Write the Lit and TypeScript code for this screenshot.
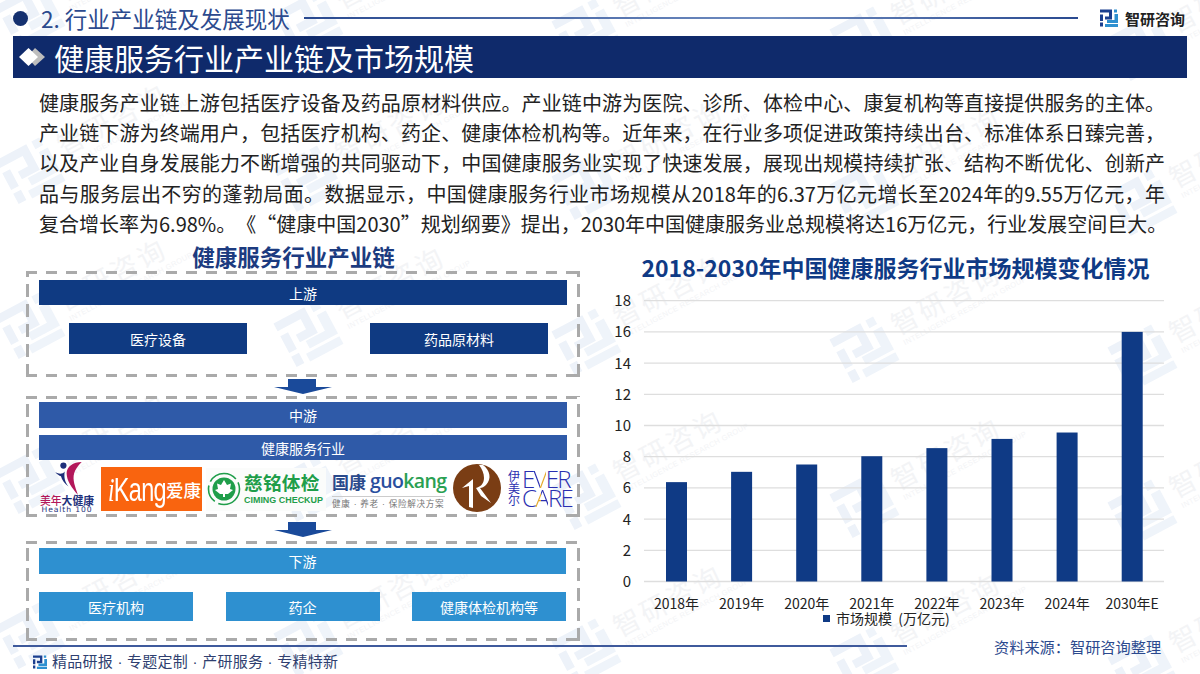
import { LitElement, html, svg, css } from "lit";
import { customElement } from "lit/decorators.js";

const BARS = [
  { label: "2018年", value: 6.37 },
  { label: "2019年", value: 7.03 },
  { label: "2020年", value: 7.5 },
  { label: "2021年", value: 8.03 },
  { label: "2022年", value: 8.55 },
  { label: "2023年", value: 9.14 },
  { label: "2024年", value: 9.55 },
  { label: "2030年E", value: 16 },
];

const INTRO = [
  "健康服务产业链上游包括医疗设备及药品原材料供应。产业链中游为医院、诊所、体检中心、康复机构等直接提供服务的主体。",
  "产业链下游为终端用户，包括医疗机构、药企、健康体检机构等。近年来，在行业多项促进政策持续出台、标准体系日臻完善，",
  "以及产业自身发展能力不断增强的共同驱动下，中国健康服务业实现了快速发展，展现出规模持续扩张、结构不断优化、创新产",
  "品与服务层出不穷的蓬勃局面。数据显示，中国健康服务行业市场规模从2018年的6.37万亿元增长至2024年的9.55万亿元，年",
  "复合增长率为6.98%。《“健康中国2030”规划纲要》提出，2030年中国健康服务业总规模将达16万亿元，行业发展空间巨大。",
];

// brand mark, 18 x 18
const mark = (dark: string, light: string) => svg`
  <path fill=${dark} d="M0 0.5H12V10.500H5V7.500H9V3.500H0Z" />
  <path fill=${dark} d="M0 5.500H3V12H0ZM0 13.500H3V17.500H0Z" />
  <path fill=${light} d="M14 0.500H17V3.500H14ZM14.500 5H18V14H7V11H14.500Z" />
  <path fill=${light} d="M5 15H18V18H5Z" />
`;

const arrow = html`<svg class="arrow" width="58" height="15" viewBox="0 0 58 15">
  <path fill="#1a4a9a" d="M14 0H42V8H58L29 15L0 8H14Z" />
</svg>`;

@customElement("app-root")
export class AppRoot extends LitElement {
  static styles = css`
    :host {
      display: block;
      position: relative;
      width: 1200px;
      height: 674px;
      overflow: hidden;
      background: #fff;
      font-family: "Noto Sans CJK SC", "Noto Sans", sans-serif;
      color: #222;
    }
    .wm {
      position: absolute;
      inset: 0;
    }
    .wm text {
      fill: #f3f4f6;
    }
    .page {
      position: relative;
      display: flex;
      flex-direction: column;
      padding: 0 13px;
      height: 674px;
      box-sizing: border-box;
    }
    .top {
      display: flex;
      align-items: center;
      height: 36px;
      flex: none;
    }
    .bullet {
      width: 15px;
      height: 15px;
      border-radius: 50%;
      background: #14306f;
      margin-right: 13px;
    }
    .section {
      font-size: 22.5px;
      line-height: 36px;
      color: #2c4a8e;
      white-space: nowrap;
    }
    .rule {
      flex: 1;
      height: 2px;
      margin: 0 22px 0 14px;
      background: linear-gradient(90deg, #2a4a90, #6f8cc0 60%, #2a4a90);
    }
    .brand {
      display: flex;
      align-items: center;
      gap: 7px;
      margin-right: 2px;
      font-size: 15px;
      font-weight: 700;
      color: #222;
    }
    .title {
      display: flex;
      align-items: center;
      height: 42px;
      flex: none;
      background: #0f2a6b;
      color: #fff;
      font-size: 30px;
    }
    .title svg {
      margin: 0 9px 0 6px;
    }
    .intro {
      margin: 10px 22px 0 26px;
      font-size: 20px;
      line-height: 30.2px;
      flex: none;
      text-spacing-trim: space-all;
    }
    .intro div {
      white-space: nowrap;
      text-align: justify;
      text-align-last: justify;
    }
    .cols {
      display: grid;
      grid-template-columns: 569px 605px;
      margin-top: 2px;
      height: 400px;
      flex: none;
    }
    .left {
      padding-left: 13px;
      display: flex;
      flex-direction: column;
    }
    .left h3 {
      margin: 0;
      width: 535px;
      text-align: center;
      font-size: 22.5px;
      line-height: 30px;
      font-weight: 700;
      color: #1c3b80;
    }
    .box {
      width: 554px;
      box-sizing: border-box;
      padding: 0 13px;
      background-image:
        repeating-linear-gradient(90deg, #aaa 0 11px, transparent 11px 20px),
        repeating-linear-gradient(90deg, #aaa 0 11px, transparent 11px 20px),
        repeating-linear-gradient(0deg, #aaa 0 13px, transparent 13px 20px),
        repeating-linear-gradient(0deg, #aaa 0 13px, transparent 13px 20px);
      background-size: 100% 3px, 100% 3px, 3px 100%, 3px 100%;
      background-position: 0 0, 0 100%, 0 0, 100% 0;
      background-repeat: no-repeat;
    }
    .b1 {
      height: 106px;
      padding-top: 9px;
    }
    .b2 {
      height: 121px;
      padding-top: 6px;
    }
    .b3 {
      height: 100px;
      padding-top: 7px;
    }
    .bar {
      display: flex;
      align-items: center;
      justify-content: center;
      color: #fff;
      font-size: 14px;
      height: 25px;
    }
    .navy {
      background: #0f3a82;
    }
    .mid {
      background: #2f5aa8;
    }
    .sky {
      background: #2e90d0;
    }
    .b2 .bar + .bar {
      margin-top: 7px;
    }
    .b2 .bar:first-child,
    .b3 > .bar {
      height: 26px;
    }
    .b3 > .bar,
    .trio {
      margin-right: 1px;
    }
    .pair {
      display: flex;
      justify-content: space-between;
      margin-top: 18px;
      padding: 0 19px 0 30px;
    }
    .pair .bar {
      width: 178px;
      height: 31px;
    }
    .trio {
      display: flex;
      justify-content: space-between;
      margin-top: 18px;
    }
    .trio .bar {
      width: 154px;
      height: 29px;
    }
    .link {
      width: 554px;
      display: flex;
      justify-content: center;
      align-items: center;
    }
    .l1 {
      height: 19px;
    }
    .l2 {
      height: 24px;
    }
    .arrow {
      display: block;
    }
    .logos {
      display: flex;
      align-items: center;
      height: 52px;
      margin: 2px -8px 0 0;
    }

    .health {
      width: 56px;
      margin-right: 6px;
      flex: none;
      display: flex;
      flex-direction: column;
      align-items: center;
      font-weight: 700;
      line-height: 1;
    }
    .health svg {
      display: block;
      margin-left: 3px;
    }
    .health .cn {
      font-size: 10.8px;
      height: 11px;
      line-height: 11px;
      color: #1d2f7a;
      white-space: nowrap;
    }
    .health .cn b {
      color: #b3175a;
      font-weight: 500;
    }
    .health .en {
      font-size: 7.6px;
      height: 8px;
      line-height: 8px;
      letter-spacing: 0.9px;
      color: #1d2f7a;
      white-space: nowrap;
      font-family: "DejaVu Sans", sans-serif;
      font-weight: 400;
    }
    .ikang {
      width: 101px;
      height: 44px;
      margin-top: 2px;
      padding-left: 7px;
      box-sizing: border-box;
      background: #f9640f;
      color: #fff;
      display: flex;
      align-items: center;
      white-space: nowrap;
      flex: none;
    }
    .ikang .en {
      font-family: "Liberation Sans", sans-serif;
      font-size: 34px;
      letter-spacing: -1px;
      display: inline-block;
      width: 58px;
      transform: scaleX(0.69);
      transform-origin: 0 50%;
    }
    .ikang .en i {
      font-family: "Liberation Serif", serif;
    }
    .ikang .cn {
      font-size: 17.5px;
      font-weight: 500;
    }
    .ciming {
      width: 120px;
      height: 43px;
      margin: 2px 0 0 4px;
      padding-left: 1px;
      box-sizing: border-box;
      background: #fbfcfb;
      display: flex;
      align-items: center;
      flex: none;
      color: #1f9e4a;
      gap: 3px;
    }
    .ciming .txt {
      line-height: 1;
      white-space: nowrap;
    }
    .ciming .cn {
      font-size: 18.6px;
      font-weight: 700;
      letter-spacing: 0.3px;
    }
    .ciming .en {
      font-family: "Liberation Sans", sans-serif;
      font-size: 8.95px;
      font-weight: 700;
      margin-top: 4px;
    }
    .guokang {
      width: 113px;
      margin: 2px 0 0 6px;
      flex: none;
      white-space: nowrap;
    }
    .guokang .head {
      display: flex;
      align-items: center;
      gap: 4px;
      height: 29px;
      padding-bottom: 2px;
      border-bottom: 1px solid #ccc;
      box-sizing: border-box;
    }
    .guokang .cn {
      font-size: 17px;
      font-weight: 700;
      color: #2a4a8c;
    }
    .guokang .en {
      font-family: "Open Sans", sans-serif;
      font-size: 19.5px;
      letter-spacing: -0.6px;
      color: #2a4f9e;
      line-height: 1;
      font-weight: 600;
    }
    .guokang .en b {
      color: #2aa052;
      font-weight: 600;
    }
    .guokang .sub {
      font-family: "Liberation Sans", "Noto Sans CJK SC", sans-serif;
      font-size: 8.6px;
      line-height: 12px;
      color: #777;
      letter-spacing: 0.7px;
      margin-top: 1px;
    }
    .evercare {
      margin-left: 7px;
      display: flex;
      align-items: center;
      flex: none;
      color: #2a2fb0;
    }
    .evercare .v {
      width: 12px;
      font-size: 12px;
      line-height: 12px;
      margin-right: 2px;
      white-space: normal;
    }
    .evercare .w {
      font-family: "Open Sans", sans-serif;
      font-size: 24px;
      line-height: 19px;
      letter-spacing: -1.7px;
      font-weight: 300;
      white-space: nowrap;
    }
    .evercare .w .vee {
      background: linear-gradient(90deg, #2a2fb0 50%, #e5a92a 50%);
      -webkit-background-clip: text;
      background-clip: text;
      color: transparent;
    }
    .evercare .w .ay {
      background: linear-gradient(90deg, #e5a92a 50%, #2a2fb0 50%);
      -webkit-background-clip: text;
      background-clip: text;
      color: transparent;
    }
    .right {
      display: flex;
      flex-direction: column;
    }
    .right h3 {
      margin: 11px 0 2px;
      padding-left: 22px;
      font-size: 23px;
      line-height: 30px;
      font-weight: 700;
      text-align: center;
      color: #0f3a85;
      white-space: nowrap;
    }
    .right svg {
      display: block;
    }
    .right text {
      font-family: "Noto Sans CJK SC", sans-serif;
      fill: #222;
    }
    .foot {
      display: flex;
      align-items: center;
      height: 22px;
      margin-top: -6px;
      flex: none;
    }
    .foot .line {
      width: 894px;
      height: 2px;
      background: #3f5a9c;
    }
    .foot .src {
      margin-left: 87px;
      font-size: 15.2px;
      color: #2c4a8e;
      white-space: nowrap;
    }
    .slogan {
      display: flex;
      align-items: center;
      gap: 5px;
      margin: -5px 0 0 20px;
      font-family: "Liberation Sans", "Noto Sans CJK SC", sans-serif;
      font-size: 15px;
      letter-spacing: 0.25px;
      line-height: 20px;
      color: #2f3f70;
      white-space: pre;
    }
  `;

  renderWatermark() {
    const spots: { x: number; y: number }[] = [];
    for (let i = 0; i < 5; i++) {
      for (let j = 0; j < 5; j++) {
        spots.push({ x: 30 + 278 * i, y: 15 + i * 8 + 155 * j });
      }
    }
    return html`<svg class="wm" width="1200" height="674" viewBox="0 0 1200 674">
      ${spots.map(
        (p) => svg`<g transform="translate(${p.x} ${p.y}) rotate(-28)">
          <g transform="translate(-26 -26) scale(2.9)">${mark("#edf2f9", "#eff4fa")}</g>
          <text x="36" y="4" font-size="27" letter-spacing="3">智研咨询</text>
          <text x="38" y="16" font-size="7.5" font-family="Liberation Sans" letter-spacing="0.4">INTELLIGENCE RESEARCH GROUP</text>
        </g>`
      )}
    </svg>`;
  }

  renderChart() {
    // svg origin sits at page (582, 285)
    const base = 297.5;
    const unit = 15.6;
    const ticks = [0, 2, 4, 6, 8, 10, 12, 14, 16, 18];
    return html`<svg width="605" height="347" viewBox="0 0 605 347">
      ${ticks.map(
        (t) => svg`
          <line x1="62" x2="582" y1=${base - t * unit} y2=${base - t * unit} stroke="#dedede" stroke-width="1.3" />
          <text x="49" y=${base - t * unit + 5.5} font-size="15" text-anchor="end">${t}</text>`
      )}
      ${BARS.map((b, i) => {
        const x = 84 + i * 65.1;
        const h = b.value * unit;
        return svg`
          <rect x=${x} y=${base - h} width="21" height=${h} fill="#0f3a85" />
          <text x=${x + 10.5} y="325" font-size="14" text-anchor="middle">${b.label}</text>`;
      })}
      <rect x="241" y="331" width="7" height="7" fill="#0f3a85" />
      <text x="254" y="340" font-size="14" xml:space="preserve">市场规模  (万亿元)</text>
    </svg>`;
  }

  render() {
    return html`
      ${this.renderWatermark()}
      <div class="page">
        <div class="top">
          <span class="bullet"></span>
          <span class="section">2. 行业产业链及发展现状</span>
          <span class="rule"></span>
          <span class="brand">
            <svg width="18" height="18" viewBox="0 0 18 18">${mark("#1b3f8f", "#2e90d0")}</svg>
            智研咨询
          </span>
        </div>
        <div class="title">
          <svg width="26" height="20" viewBox="0 0 26 20">
            <path fill="#bdbdbd" d="M16 1L26 10L16 19L8 10Z" />
            <path fill="#fff" d="M9.500 1L19 10L9.500 19L0 10Z" />
          </svg>
          健康服务行业产业链及市场规模
        </div>
        <div class="intro">${INTRO.map((l) => html`<div>${l}</div>`)}</div>
        <div class="cols">
          <div class="left">
            <h3>健康服务行业产业链</h3>
            <div class="box b1">
              <div class="bar navy">上游</div>
              <div class="pair">
                <div class="bar navy">医疗设备</div>
                <div class="bar navy">药品原材料</div>
              </div>
            </div>
            <div class="link l1">${arrow}</div>
            <div class="box b2">
              <div class="bar mid">中游</div>
              <div class="bar mid">健康服务行业</div>
              <div class="logos">
                <div class="health">
                  <svg width="29" height="33" viewBox="0 0 30 35">
                    <circle cx="9.600" cy="3.800" r="3.300" fill="#1d2f7a" />
                    <path fill="#1d2f7a" d="M1 11C5 13 9 13 11 10C10 16 11 21 15 26C11 23 8 19 7 15C5 15 3 13 1 11Z" />
                    <path fill="#b3175a" d="M29 0C20 0 13 5 13 12C13 20 19 28 25 35C22 26 19 19 21 12C22 8 25 4 29 0Z" />
                  </svg>
                  <div class="cn"><b>美年</b>大健康</div>
                  <div class="en">Health 100</div>
                </div>
                <div class="ikang">
                  <span class="en"><i>i</i>Kang</span><span class="cn">爱康</span>
                </div>
                <div class="ciming">
                  <svg width="34" height="34" viewBox="0 0 34 34" style="flex:none">
                    <circle cx="17" cy="17" r="15.500" fill="none" stroke="#1f9e4a" stroke-width="1.600" stroke-dasharray="30 4 18 4" />
                    <circle cx="17" cy="17" r="11.500" fill="#1f9e4a" />
                    <path fill="#fff" d="M17 8L20 13L24 11.500L23 17L26 18L21 22H18V25H16V22H13L8 18L11 17L10 11.500L14 13Z" />
                  </svg>
                  <div class="txt">
                    <div class="cn">慈铭体检</div>
                    <div class="en">CIMING CHECKUP</div>
                  </div>
                </div>
                <div class="guokang">
                  <div class="head">
                    <span class="cn">国康</span>
                    <span class="en">guo<b>kang</b></span>
                  </div>
                  <div class="sub">健康 · 养老 · 保险解决方案</div>
                </div>
                <svg width="48" height="48" viewBox="0 0 48 48" style="flex:none;margin-left:8px">
                  <circle cx="24" cy="24" r="24" fill="#7a3d14" />
                  <path fill="#fff" d="M26 1L30 1C37 6 39 15 33 21C31 23 29 24 27 24L38 39L28 32L23 24C27 23 31 20 31 14C31 9 29 5 26 1Z" />
                  <path fill="#fff" d="M20 15V44L16 43V22L9 24Z" />
                </svg>
                <div class="evercare">
                  <div class="v">伊美尔</div>
                  <div class="w">E<span class="vee">V</span>ER<br />C<span class="ay">A</span>RE</div>
                </div>
              </div>
            </div>
            <div class="link l2">${arrow}</div>
            <div class="box b3">
              <div class="bar sky">下游</div>
              <div class="trio">
                <div class="bar sky">医疗机构</div>
                <div class="bar sky">药企</div>
                <div class="bar sky">健康体检机构等</div>
              </div>
            </div>
          </div>
          <div class="right">
            <h3>2018-2030年中国健康服务行业市场规模变化情况</h3>
            ${this.renderChart()}
          </div>
        </div>
        <div class="foot">
          <span class="line"></span>
          <span class="src">资料来源：智研咨询整理</span>
        </div>
        <div class="slogan">
          <svg width="14" height="14" viewBox="0 0 18 18">${mark("#1b3f8f", "#2e90d0")}</svg>
          <span>精品研报 · 专题定制 · 产研服务 · 专精特新</span>
        </div>
      </div>
    `;
  }
}
